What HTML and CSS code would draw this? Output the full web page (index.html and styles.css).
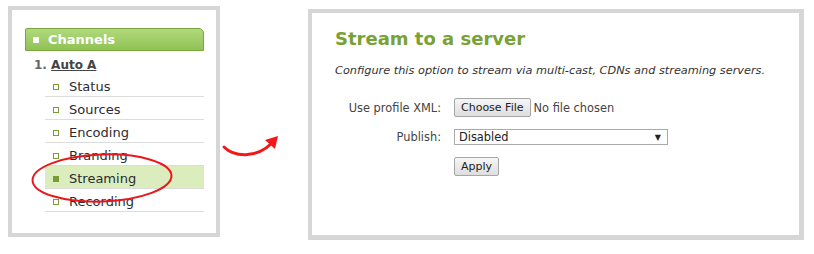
FILE: index.html
```html
<!DOCTYPE html>
<html lang="en">
<head>
  <meta charset="UTF-8">
  <title>Stream to a server</title>
  <link rel="stylesheet" href="styles.css">
</head>
<body>
  <div class="shot">
    <div class="side-panel">
      <div class="menu-head"><span class="sq"></span>Channels</div>
      <div class="channel-name">1. <a href="#">Auto A</a></div>
      <ul class="menu">
        <li><span class="dot"></span>Status</li>
        <li><span class="dot"></span>Sources</li>
        <li><span class="dot"></span>Encoding</li>
        <li><span class="dot"></span>Branding</li>
        <li class="active"><span class="dot"></span>Streaming</li>
        <li><span class="dot"></span>Recording</li>
      </ul>
      <svg class="ring" width="150" height="60" viewBox="0 0 150 60">
        <ellipse cx="75" cy="30" rx="69.5" ry="23.5" fill="none" stroke="#e8171c" stroke-width="2" transform="rotate(-2 75 30)"/>
      </svg>
    </div>
    <svg class="arrow" width="88" height="231" viewBox="0 0 88 231">
      <path d="M4 141 C 14 151, 36 153, 52 137" fill="none" stroke="#f21818" stroke-width="3" stroke-linecap="round"/>
      <path d="M58 130 L 45 134 L 55 143 Z" fill="#f21818"/>
    </svg>
    <div class="main-panel">
      <h1>Stream to a server</h1>
      <p class="lead">Configure this option to stream via multi-cast, CDNs and streaming servers.</p>
      <div class="form">
        <label>Use profile XML:</label>
        <div class="field"><button class="btn">Choose File</button><span class="nofile">No file chosen</span></div>
        <label>Publish:</label>
        <div class="field"><div class="select"><span>Disabled</span><span class="caret">&#9660;</span></div></div>
        <span></span>
        <div class="field"><button class="btn">Apply</button></div>
      </div>
    </div>
  </div>
</body>
</html>
```

FILE: styles.css
```css
body {
  margin: 0;
  background: #fff;
  font-family: "DejaVu Sans", Verdana, sans-serif;
  color: #333;
}
.shot {
  display: flex;
  align-items: flex-start;
  padding: 6px 0 0 8px;
}
.side-panel {
  position: relative;
  width: 212px;
  height: 231px;
  box-sizing: border-box;
  border: 4px solid #d6d6d6;
  padding: 18px 12px 0 13px;
}
.menu-head {
  display: flex;
  align-items: center;
  height: 21px;
  border: 1px solid #79a83a;
  border-radius: 2px 5px 0 0;
  background: linear-gradient(to bottom, #b2d97c, #8fc255);
  color: #fff;
  font-weight: bold;
  font-size: 13px;
  text-shadow: 0 0 1px #9ccf6a;
  padding-left: 7px;
}
.menu-head .sq {
  width: 6px;
  height: 6px;
  background: #fff;
  margin-right: 9px;
}
.channel-name {
  font-size: 12px;
  font-weight: bold;
  color: #666;
  padding: 7px 0 0 9px;
  height: 16px;
}
.channel-name a {
  color: #444;
}
.menu {
  list-style: none;
  margin: 0 0 0 20px;
  padding: 0;
}
.menu li {
  display: flex;
  align-items: center;
  height: 19px;
  padding-top: 3px;
  border-bottom: 1px solid #dcdcdc;
  font-size: 13px;
  color: #2b2b33;
  padding-left: 8px;
}
.menu .dot {
  width: 4px;
  height: 4px;
  border: 1px solid #7a9c34;
  margin-right: 10px;
}
.menu li.active {
  background: #dcedbd;
}
.menu li.active .dot {
  background: #7a9c34;
}
.ring {
  position: absolute;
  left: 15px;
  top: 138px;
}
.arrow {
  flex: 0 0 88px;
}
.main-panel {
  width: 496px;
  height: 231px;
  margin-top: 3px;
  box-sizing: border-box;
  border: 4px solid #d6d6d6;
  border-width: 4px 5px 5px 4px;
  padding: 15px 0 0 23px;
}
.main-panel h1 {
  margin: 0;
  font-size: 18px;
  line-height: 22px;
  color: #79a133;
}
.lead {
  margin: 14px 0 0;
  font-size: 11.3px;
  font-style: italic;
  color: #333;
}
.form {
  display: grid;
  grid-template-columns: 106px 1fr;
  column-gap: 13px;
  row-gap: 12px;
  align-items: center;
  margin: 21px 0 0 0;
  font-size: 11.4px;
  color: #444;
}
.form label {
  text-align: right;
}
.field {
  display: flex;
  align-items: center;
}
.btn {
  font-family: inherit;
  font-size: 11px;
  color: #222;
  background: linear-gradient(to bottom, #f6f6f6, #dedede);
  border: 1px solid #a6a6a6;
  border-radius: 2px;
  height: 19px;
  padding: 0 6px;
}
.nofile {
  margin-left: 3px;
}
.select {
  display: flex;
  justify-content: space-between;
  align-items: center;
  width: 214px;
  box-sizing: border-box;
  height: 16px;
  border: 1px solid #a9a9a9;
  padding: 0 6px 0 4px;
  color: #222;
}
.caret {
  font-size: 8px;
}
```
